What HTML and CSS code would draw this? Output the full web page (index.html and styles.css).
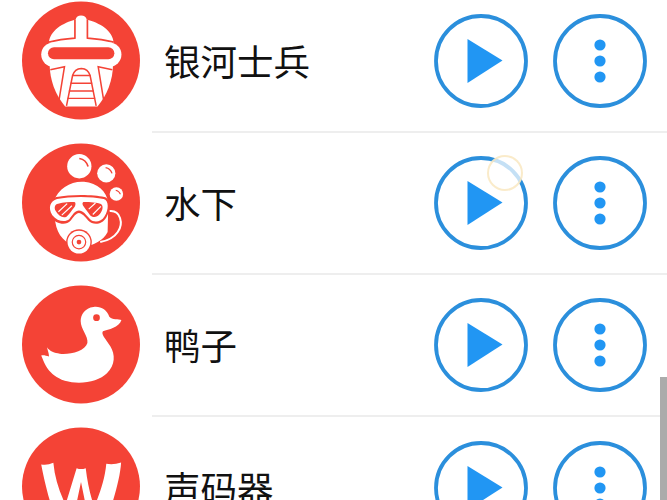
FILE: index.html
```html
<!DOCTYPE html>
<html lang="zh">
<head>
<meta charset="utf-8">
<title>声音列表</title>
<link rel="stylesheet" href="styles.css">
</head>
<body>
<svg class="defs" width="0" height="0" aria-hidden="true">
  <symbol id="play" viewBox="0 0 94 94">
    <circle cx="47" cy="47" r="45" fill="none" stroke="#2b8fdc" stroke-width="3.8"/>
    <path d="M33.500 25 L68.500 46.500 L33.500 69 Z" fill="#2196f3"/>
  </symbol>
  <symbol id="more" viewBox="0 0 94 94">
    <circle cx="47" cy="47" r="45" fill="none" stroke="#2b8fdc" stroke-width="3.8"/>
    <circle cx="47" cy="31" r="5.6" fill="#2196f3"/>
    <circle cx="47" cy="47" r="5.6" fill="#2196f3"/>
    <circle cx="47" cy="63" r="5.6" fill="#2196f3"/>
  </symbol>
</svg>
<main class="screen">
  <ul class="list">
    <li class="row">
      <svg class="avatar" viewBox="38 5 350 353">
        <circle cx="213" cy="181.500" r="175" fill="#f44336"/>
        <path d="M118 130 C120 92 160 70 197 60 Q200 48 213 48 Q227 48 230 60 C268 70 308 92 310 130 Z" fill="#fff"/>
        <path d="M195 60 V115 Q150 118 118 127 M232 60 V115 Q276 118 310 127" fill="none" stroke="#f44336" stroke-width="5"/>
        <rect x="95" y="128" width="238" height="72" rx="36" fill="#fff"/>
        <rect x="115" y="142" width="197" height="36" rx="18" fill="#f44336"/>
        <path d="M120 192 H308 C308 240 290 285 262 318 H166 C138 285 120 240 120 192 Z" fill="#fff"/>
        <path d="M122 209 L164 200 L147 304 M306 209 L264 200 L281 304" fill="none" stroke="#f44336" stroke-width="4.500"/>
        <path d="M170 316 L188 226 Q194 206 214 205 Q234 206 240 226 L258 316" fill="#fff" stroke="#f44336" stroke-width="4.500"/>
        <path d="M187 226 H241 M182 249 H246 M177 272 H251 M173 294 H255" fill="none" stroke="#f44336" stroke-width="4"/>
      </svg>
      <div class="body">
        <span class="name">银河士兵</span>
        <div class="actions">
          <svg class="btn"><use href="#play"/></svg>
          <svg class="btn"><use href="#more"/></svg>
        </div>
      </div>
    </li>
    <li class="row">
      <svg class="avatar" viewBox="38 26 350 353">
        <circle cx="213" cy="202.500" r="175" fill="#f44336"/>
        <circle cx="208" cy="95" r="36" fill="#fff"/>
        <path d="M208 72 Q228 75 234 96" fill="none" stroke="#f44336" stroke-width="5"/>
        <circle cx="288" cy="116" r="27" fill="#fff"/>
        <path d="M286 99 Q300 101 305 116" fill="none" stroke="#f44336" stroke-width="4"/>
        <circle cx="318" cy="177" r="20" fill="#fff"/>
        <path d="M316 166 Q326 168 330 178" fill="none" stroke="#f44336" stroke-width="3"/>
        <path d="M132 200 C145 160 185 138 222 141 C262 144 290 170 294 205 L292 290 C280 315 250 330 220 335 C180 335 150 310 140 275 C134 250 130 225 132 200 Z" fill="#fff"/>
        <path d="M298 228 C330 225 340 265 322 290 C310 308 295 315 270 320" fill="none" stroke="#fff" stroke-width="6"/>
        <path d="M140 186 C180 178 250 178 282 186 C302 190 302 225 288 247 C275 270 248 270 235 257 C225 245 215 234 207 234 C198 234 192 245 182 257 C168 272 138 267 122 244 C106 218 116 192 140 186 Z" fill="#f44336"/>
        <path d="M142 192 C180 184 245 184 280 192 C296 196 296 224 283 243 C272 262 250 262 240 252 C228 238 218 226 207 226 C196 226 188 238 178 252 C166 262 142 258 128 240 C114 218 122 197 142 192 Z" fill="#fff"/>
        <path d="M145 206 C160 202 180 201 193 201 C198 201 198 212 192 218 C185 226 178 238 170 245 C158 250 146 242 138 228 C132 216 136 208 145 206 Z M222 201 C240 201 262 202 272 207 C280 212 278 225 270 235 C258 250 246 246 240 240 C234 232 226 222 222 216 C216 208 216 201 222 201 Z" fill="#f44336"/>
        <path d="M146 230 L172 206 M156 240 L186 212 M236 222 L256 204 M248 238 L272 214" fill="none" stroke="#fff" stroke-width="3.500"/>
        <circle cx="207" cy="320" r="38" fill="#f44336"/>
        <circle cx="207" cy="320" r="34" fill="#fff"/>
        <circle cx="207" cy="320" r="20" fill="none" stroke="#f44336" stroke-width="3.500"/>
        <circle cx="207" cy="320" r="7" fill="#f44336"/>
      </svg>
      <div class="body">
        <span class="name">水下</span>
        <div class="actions">
          <svg class="btn"><use href="#play"/></svg>
          <svg class="btn"><use href="#more"/></svg>
        </div>
      </div>
    </li>
    <li class="row">
      <svg class="avatar" viewBox="38 18 350 353">
        <circle cx="213" cy="194.500" r="175" fill="#f44336"/>
        <path d="M333 122 C325 118 305 122 297 112 C290 90 270 80 250 83 C225 86 212 105 212 125 C212 150 235 170 232 190 C225 215 180 225 150 222 C135 220 120 215 112 203 C115 215 118 222 118 230 C110 228 102 225 95 227 C105 250 115 285 165 302 C210 315 265 305 290 280 C315 255 315 225 300 200 C285 175 272 165 278 155 C295 150 325 145 333 122 Z" fill="#fff"/>
        <circle cx="259" cy="115" r="10" fill="#f44336"/>
      </svg>
      <div class="body">
        <span class="name">鸭子</span>
        <div class="actions">
          <svg class="btn"><use href="#play"/></svg>
          <svg class="btn"><use href="#more"/></svg>
        </div>
      </div>
    </li>
    <li class="row">
      <svg class="avatar" viewBox="38 25 350 353">
        <circle cx="213" cy="201.500" r="175" fill="#f44336"/>
        <path d="M95 136 Q112 140 131 131 C135 175 148 215 167 255 C178 220 190 180 200 147 Q213 152 227 147 C232 190 240 225 252 262 C268 225 284 180 288 134 Q310 138 332 130 C328 190 300 270 275 345 H245 L213 188 L180 345 H155 C125 270 105 190 95 136 Z" fill="#fff"/>
      </svg>
      <div class="body">
        <span class="name">声码器</span>
        <div class="actions">
          <svg class="btn"><use href="#play"/></svg>
          <svg class="btn"><use href="#more"/></svg>
        </div>
      </div>
    </li>
  </ul>
  <div class="ripple"></div>
  <div class="scrollbar"></div>
</main>
</body>
</html>
```
FILE: styles.css
```css
* { box-sizing: border-box; }
html, body { margin: 0; padding: 0; background: #fff; }
.defs { position: absolute; }
.screen {
  position: relative;
  width: 667px;
  height: 500px;
  overflow: hidden;
  background: #fff;
}
.list {
  list-style: none;
  margin: -9px 0 0;
  padding: 0;
}
.row {
  display: flex;
  align-items: center;
  height: 142px;
  padding-left: 22px;
}
.avatar {
  flex: none;
  width: 118px;
  height: 119px;
  margin-bottom: 3px;
}
.body {
  flex: 1;
  align-self: stretch;
  display: flex;
  align-items: center;
  justify-content: space-between;
  margin-left: 12px;
  padding: 0 20px 0 12px;
  border-bottom: 2px solid #eeeeee;
}
.row:last-child .body { border-bottom: 0; }
.name {
  font-family: "Noto Sans CJK SC", "Noto Sans", sans-serif;
  font-size: 36.5px;
  font-weight: 400;
  line-height: 44px;
  color: #111;
}
.actions {
  display: flex;
  gap: 25px;
  margin-bottom: 1px;
}
.btn {
  display: block;
  width: 94px;
  height: 94px;
}
.ripple {
  position: absolute;
  left: 487px;
  top: 155px;
  width: 36px;
  height: 36px;
  border-radius: 50%;
  border: 2px solid rgba(248, 226, 180, 0.7);
  background: rgba(255, 255, 255, 0.72);
}
.scrollbar {
  position: absolute;
  right: 0;
  bottom: 0;
  width: 7px;
  height: 123px;
  background: #ababab;
}
```
